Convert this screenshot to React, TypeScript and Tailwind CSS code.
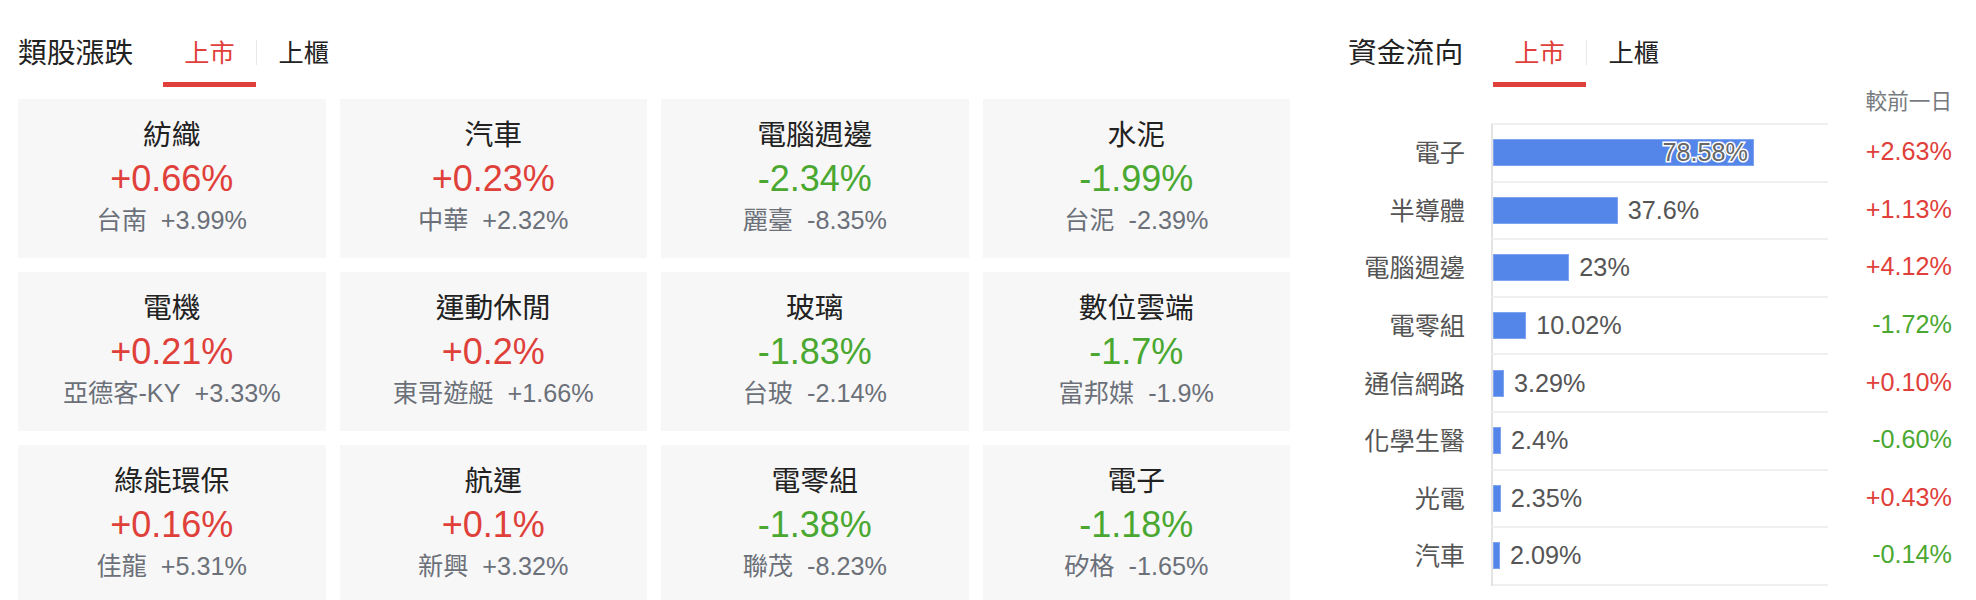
import React from 'react';

type Sector = { name: string; change: string; leader: string; leaderChange: string };
type Flow = { name: string; share: number; label: string; change: string };

const sectors: Sector[] = [
    { name: '紡織', change: '+0.66%', leader: '台南', leaderChange: '+3.99%' },
    { name: '汽車', change: '+0.23%', leader: '中華', leaderChange: '+2.32%' },
    { name: '電腦週邊', change: '-2.34%', leader: '麗臺', leaderChange: '-8.35%' },
    { name: '水泥', change: '-1.99%', leader: '台泥', leaderChange: '-2.39%' },
    { name: '電機', change: '+0.21%', leader: '亞德客-KY', leaderChange: '+3.33%' },
    { name: '運動休閒', change: '+0.2%', leader: '東哥遊艇', leaderChange: '+1.66%' },
    { name: '玻璃', change: '-1.83%', leader: '台玻', leaderChange: '-2.14%' },
    { name: '數位雲端', change: '-1.7%', leader: '富邦媒', leaderChange: '-1.9%' },
    { name: '綠能環保', change: '+0.16%', leader: '佳龍', leaderChange: '+5.31%' },
    { name: '航運', change: '+0.1%', leader: '新興', leaderChange: '+3.32%' },
    { name: '電零組', change: '-1.38%', leader: '聯茂', leaderChange: '-8.23%' },
    { name: '電子', change: '-1.18%', leader: '矽格', leaderChange: '-1.65%' },
];

const flows: Flow[] = [
    { name: '電子', share: 78.58, label: '78.58%', change: '+2.63%' },
    { name: '半導體', share: 37.6, label: '37.6%', change: '+1.13%' },
    { name: '電腦週邊', share: 23, label: '23%', change: '+4.12%' },
    { name: '電零組', share: 10.02, label: '10.02%', change: '-1.72%' },
    { name: '通信網路', share: 3.29, label: '3.29%', change: '+0.10%' },
    { name: '化學生醫', share: 2.4, label: '2.4%', change: '-0.60%' },
    { name: '光電', share: 2.35, label: '2.35%', change: '+0.43%' },
    { name: '汽車', share: 2.09, label: '2.09%', change: '-0.14%' },
];

const up = (v: string) => v.startsWith('+');

function SectionHeader({ title }: { title: string }) {
    return (
        <div className="flex items-start h-[87px]">
            <span className="mt-[33px] mr-[30px] text-[28.8px] leading-[40px] text-[#222]">{title}</span>
            <div className="flex flex-col items-stretch">
                <span className="mt-[33px] px-[21px] text-[25.2px] leading-[40px] text-[#e0403a]">上市</span>
                <span className="mt-[9px] h-[5px] bg-[#e0403a]" />
            </div>
            <span className="mt-[40px] w-px h-[25px] bg-[#e8e8e8]" />
            <span className="mt-[33px] px-[22px] text-[25.2px] leading-[40px] text-[#222]">上櫃</span>
        </div>
    );
}

function SectorCard({ s }: { s: Sector }) {
    return (
        <div className="h-[159px] bg-[#f7f7f7] flex flex-col items-center pt-[15px]">
            <div className="text-[28.8px] leading-[42px] text-[#222]">{s.name}</div>
            <div className={`text-[36px] leading-[46px] ${up(s.change) ? 'text-[#e0403a]' : 'text-[#4aa831]'}`}>{s.change}</div>
            <div className="text-[25.2px] leading-[37px] text-[#6b7079] whitespace-nowrap">
                {s.leader}
                <span className="ml-[14px]">{s.leaderChange}</span>
            </div>
        </div>
    );
}

function FlowRow({ f, first }: { f: Flow; first: boolean }) {
    const inside = f.share > 50;
    return (
        <div className="flex items-center h-[57.6px]">
            <div className="w-[117px] text-right text-[25.2px] text-[#555] leading-none pt-[4px]">{f.name}</div>
            <div className={`ml-[26px] w-[337px] h-full flex items-center border-l-2 border-l-[#e3e3e3] border-t-2 border-t-[#efefef] ${first ? '' : ''}`}>
                <div
                    className="h-[27px] bg-[#5486ea] border border-[#7ea3ef] flex items-center justify-end"
                    style={{ width: `${(f.share / 100) * 332}px` }}
                >
                    {inside && (
                        <span className="pr-[5px] text-[25.2px] leading-none text-[#666] [-webkit-text-stroke:3px_white] [paint-order:stroke_fill]">
                            {f.label}
                        </span>
                    )}
                </div>
                {!inside && <span className="ml-[10px] text-[25.2px] leading-none text-[#555]">{f.label}</span>}
            </div>
            <div className={`flex-1 text-right text-[25.2px] leading-none ${up(f.change) ? 'text-[#e0403a]' : 'text-[#4aa831]'}`}>
                {f.change}
            </div>
        </div>
    );
}

export default function App() {
    return (
        <div
            className="w-[1976px] bg-white flex pl-[18px] pr-[24px]"
            style={{ fontFamily: '"Liberation Sans", "Noto Sans CJK TC", sans-serif' }}
        >
            <section className="w-[1272px]">
                <SectionHeader title="類股漲跌" />
                <div className="mt-[12px] grid grid-cols-4 gap-[14px]">
                    {sectors.map((s) => (
                        <SectorCard key={s.name + s.leader} s={s} />
                    ))}
                </div>
            </section>

            <section className="ml-[58px] w-[604px]">
                <SectionHeader title="資金流向" />
                <div className="h-[30px] text-right text-[21.6px] leading-[30px] text-[#777b80]">較前一日</div>
                <div className="mt-[6px]">
                    {flows.map((f, i) => (
                        <FlowRow key={f.name} f={f} first={i === 0} />
                    ))}
                    <div className="flex">
                        <div className="ml-[143px] w-[337px] h-[2px] border-l-2 border-l-[#e3e3e3] bg-[#efefef]" />
                    </div>
                </div>
            </section>
        </div>
    );
}
